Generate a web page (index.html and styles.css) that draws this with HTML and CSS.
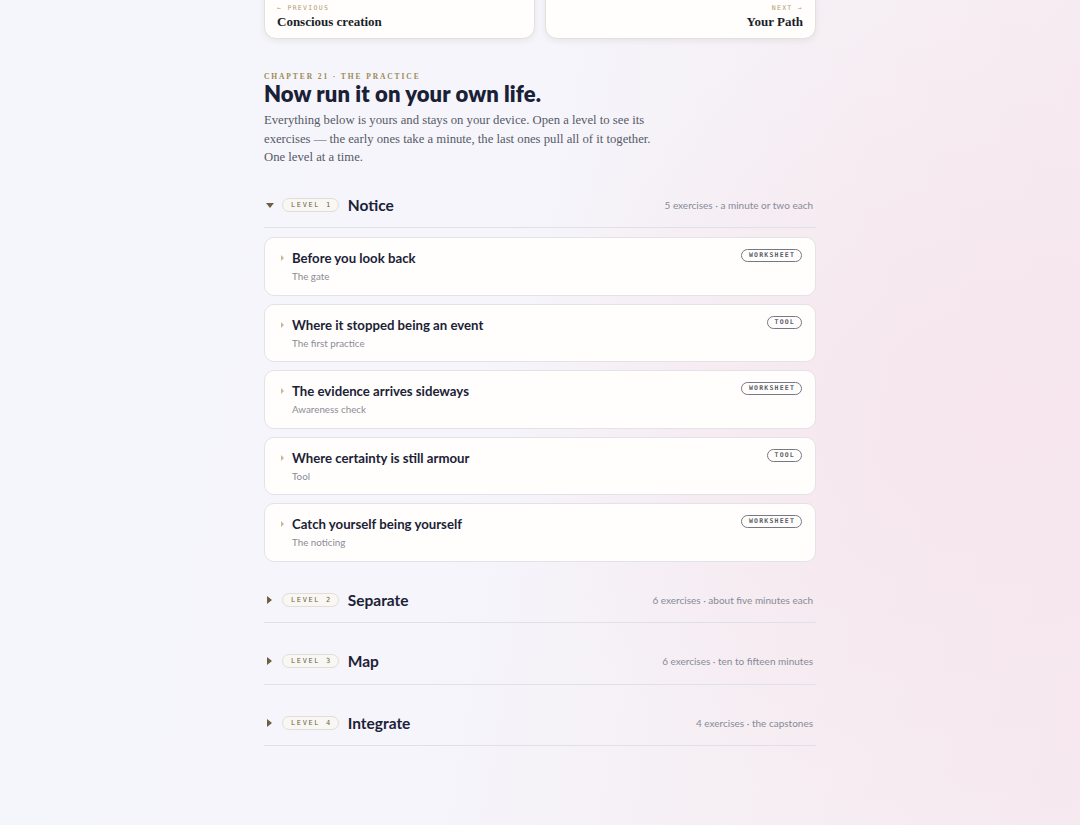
FILE: index.html
```html
<!DOCTYPE html>
<html lang="en">
<head>
<meta charset="utf-8">
<title>Chapter 21 · The Practice</title>
<link rel="stylesheet" href="styles.css">
</head>
<body>
<main class="page">
  <nav class="pager">
    <a class="pager-card" href="#">
      <span class="pager-label">← PREVIOUS</span>
      <span class="pager-title">Conscious creation</span>
    </a>
    <a class="pager-card pager-next" href="#">
      <span class="pager-label">NEXT →</span>
      <span class="pager-title">Your Path</span>
    </a>
  </nav>

  <header class="intro">
    <div class="eyebrow">CHAPTER 21 · THE PRACTICE</div>
    <h1 class="title">Now run it on your own life.</h1>
    <p class="lede">Everything below is yours and stays on your device. Open a level to see its exercises — the early ones take a minute, the last ones pull all of it together. One level at a time.</p>
  </header>

  <section class="level open">
    <div class="level-head">
      <span class="caret caret-down"></span>
      <span class="level-pill">LEVEL 1</span>
      <span class="level-name">Notice</span>
      <span class="level-meta">5 exercises · a minute or two each</span>
    </div>
    <div class="exercises">
      <div class="exercise">
        <span class="ex-caret"></span>
        <div class="ex-text">
          <div class="ex-title">Before you look back</div>
          <div class="ex-sub">The gate</div>
        </div>
        <span class="badge">WORKSHEET</span>
      </div>
      <div class="exercise">
        <span class="ex-caret"></span>
        <div class="ex-text">
          <div class="ex-title">Where it stopped being an event</div>
          <div class="ex-sub">The first practice</div>
        </div>
        <span class="badge">TOOL</span>
      </div>
      <div class="exercise">
        <span class="ex-caret"></span>
        <div class="ex-text">
          <div class="ex-title">The evidence arrives sideways</div>
          <div class="ex-sub">Awareness check</div>
        </div>
        <span class="badge">WORKSHEET</span>
      </div>
      <div class="exercise">
        <span class="ex-caret"></span>
        <div class="ex-text">
          <div class="ex-title">Where certainty is still armour</div>
          <div class="ex-sub">Tool</div>
        </div>
        <span class="badge">TOOL</span>
      </div>
      <div class="exercise">
        <span class="ex-caret"></span>
        <div class="ex-text">
          <div class="ex-title">Catch yourself being yourself</div>
          <div class="ex-sub">The noticing</div>
        </div>
        <span class="badge">WORKSHEET</span>
      </div>
    </div>
  </section>

  <section class="level">
    <div class="level-head">
      <span class="caret caret-right"></span>
      <span class="level-pill">LEVEL 2</span>
      <span class="level-name">Separate</span>
      <span class="level-meta">6 exercises · about five minutes each</span>
    </div>
  </section>

  <section class="level">
    <div class="level-head">
      <span class="caret caret-right"></span>
      <span class="level-pill">LEVEL 3</span>
      <span class="level-name">Map</span>
      <span class="level-meta">6 exercises · ten to fifteen minutes</span>
    </div>
  </section>

  <section class="level">
    <div class="level-head">
      <span class="caret caret-right"></span>
      <span class="level-pill">LEVEL 4</span>
      <span class="level-name">Integrate</span>
      <span class="level-meta">4 exercises · the capstones</span>
    </div>
  </section>
</main>
</body>
</html>
```

FILE: styles.css
```css
* { box-sizing: border-box; }

html, body { height: 100%; }

body {
  margin: 0;
  font-family: "Lato", "Noto Sans", sans-serif;
  color: #1c2236;
  background:
    radial-gradient(ellipse 700px 600px at 1000px 420px, rgba(246, 228, 236, 0.85), rgba(246, 228, 236, 0) 70%),
    linear-gradient(100deg, #f5f6fc 0%, #f5f5fb 45%, #f6eef3 75%, #f6e9ef 100%);
  overflow: hidden;
}

.page {
  width: 552px;
  margin: 0 auto;
}

/* pager */
.pager {
  display: grid;
  grid-template-columns: 1fr 1fr;
  gap: 10px;
  margin-top: -14px;
}

.pager-card {
  display: flex;
  flex-direction: column;
  padding: 16px 12px 8px;
  background: #fffefc;
  border: 1px solid #e4e0da;
  border-radius: 12px;
  box-shadow: 0 2px 6px rgba(40, 30, 20, 0.07);
  text-decoration: none;
}

.pager-next { align-items: flex-end; }

.pager-label {
  font-family: "DejaVu Sans Mono", "Liberation Mono", monospace;
  font-size: 6.5px;
  letter-spacing: 1.3px;
  color: #ad9c6a;
  line-height: 10px;
}

.pager-title {
  font-family: "Liberation Serif", serif;
  font-weight: 700;
  font-size: 13px;
  line-height: 16px;
  color: #1c1f2a;
  margin-top: 1px;
}

/* intro */
.intro { margin-top: 32px; }

.eyebrow {
  font-family: "Liberation Serif", serif;
  font-weight: 700;
  font-size: 7.5px;
  letter-spacing: 1.9px;
  color: #9c8a55;
  line-height: 12px;
}

.title {
  margin: 0;
  font-family: "Lato", sans-serif;
  font-weight: 800;
  font-size: 22px;
  line-height: 22px;
  color: #1a2136;
  letter-spacing: 0.1px;
}

.lede {
  margin: 6px 0 0;
  width: 395px;
  font-family: "Liberation Serif", serif;
  font-size: 12.7px;
  line-height: 18.5px;
  color: #555a66;
}

/* levels */
.level-head {
  display: flex;
  align-items: center;
  padding: 28px 3px 12.5px 2px;
  border-bottom: 1px solid #e0e0e8;
}

.caret {
  width: 0;
  height: 0;
}

.caret-down {
  border-left: 4px solid transparent;
  border-right: 4px solid transparent;
  border-top: 5px solid #6f5e42;
  margin-top: 2px;
  margin-right: 8px;
}

.caret-right {
  border-top: 4px solid transparent;
  border-bottom: 4px solid transparent;
  border-left: 5px solid #6f5e42;
  margin-left: 1px;
  margin-right: 10px;
}

.level-pill {
  font-family: "DejaVu Sans Mono", "Liberation Mono", monospace;
  font-size: 7px;
  letter-spacing: 1.6px;
  color: #6d5f45;
  line-height: 12px;
  padding: 0 6px 0 8px;
  border: 1px solid #e2ded6;
  background: #f8f7f3;
  border-radius: 8px;
}

.level-name {
  margin-left: 9px;
  font-weight: 700;
  font-size: 15.5px;
  line-height: 20px;
  color: #1c2236;
}

.level-meta {
  margin-left: auto;
  font-size: 10px;
  color: #878a96;
}

.exercises {
  display: flex;
  flex-direction: column;
  gap: 8px;
  margin-top: 9px;
}

.exercise {
  display: flex;
  align-items: flex-start;
  padding: 12px 13px 12px 14px;
  background: #fffefd;
  border: 1px solid #e3e2e6;
  border-radius: 10px;
  height: 58.5px;
}

.ex-caret {
  width: 0;
  height: 0;
  margin-top: 5px;
  margin-left: 2px;
  margin-right: 8px;
  border-top: 3.5px solid transparent;
  border-bottom: 3.5px solid transparent;
  border-left: 3.5px solid #c9b894;
}

.ex-text { flex: 1; }

.ex-title {
  font-weight: 700;
  font-size: 13.2px;
  line-height: 16px;
  color: #1c2236;
}

.ex-sub {
  margin-top: 4px;
  font-size: 9.8px;
  line-height: 13px;
  color: #8a8c96;
}

.badge {
  font-family: "DejaVu Sans Mono", "Liberation Mono", monospace;
  font-size: 6.5px;
  font-weight: 700;
  letter-spacing: 1.2px;
  line-height: 11px;
  color: #5a5d66;
  padding: 0 6px 0 7px;
  border: 1px solid #767981;
  border-radius: 8px;
  margin-top: -1px;
}
```
